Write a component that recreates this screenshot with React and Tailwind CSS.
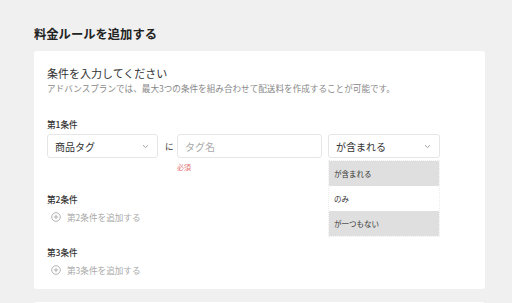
import React from "react";

const Chevron = () => (
  <svg width="7" height="5" viewBox="0 0 7 5" fill="none">
    <path d="M1 1.2 L3.5 3.6 L6 1.2" stroke="#9a9a9a" strokeWidth="0.9" />
  </svg>
);

const PlusCircle = () => (
  <svg width="10" height="10" viewBox="0 0 10 10" fill="none">
    <circle cx="5" cy="5" r="4.3" stroke="#aaaaaa" strokeWidth="0.9" />
    <path d="M5 2.8 V7.2 M2.8 5 H7.2" stroke="#aaaaaa" strokeWidth="0.9" />
  </svg>
);

export default function App() {
  return (
    <div
      className="w-[512px] h-[303px] overflow-hidden bg-[#f0f0f0] pl-[34px] pt-[26px]"
      style={{ fontFamily: '"Noto Sans CJK JP", "Noto Sans", sans-serif' }}
    >
      <div className="text-[12.3px] leading-[16px] font-bold text-[#222]">料金ルールを追加する</div>
      <div className="mt-[9px] w-[451px] bg-white rounded-[3px] pl-[13px] pt-[15px] pb-[13px]">
        <div className="text-[11px] leading-[14px] text-[#333]">条件を入力してください</div>
        <div className="mt-[2px] text-[8.6px] leading-[12px] text-[#888] whitespace-nowrap">
          アドバンスプランでは、最大3つの条件を組み合わせて配送料を作成することが可能です。
        </div>

        <div className="mt-[24px] text-[8.6px] leading-[12px] font-medium text-[#333]">第1条件</div>
        <div className="mt-[4px] flex items-start">
          <div className="w-[111px] h-[24px] shrink-0 border border-[#e6e6e6] rounded-[3px] flex items-center justify-between pl-[7px] pr-[8px]">
            <span className="text-[10px] text-[#333]">商品タグ</span>
            <Chevron />
          </div>
          <div className="h-[24px] w-[9px] shrink-0 flex items-center ml-[7px] mr-[3px] text-[8.6px] text-[#333]">に</div>
          <div className="flex flex-col shrink-0">
            <div className="w-[145px] h-[24px] border border-[#e6e6e6] rounded-[3px] flex items-center pl-[7px]">
              <span className="text-[10px] text-[#aaa]">タグ名</span>
            </div>
            <div className="mt-[4px] text-[7px] leading-[10px] text-[#e57373]">必須</div>
          </div>
          <div className="ml-[6px] relative shrink-0">
            <div className="w-[112px] h-[24px] border border-[#e6e6e6] rounded-[3px] flex items-center justify-between pl-[7px] pr-[8px]">
              <span className="text-[10px] text-[#333]">が含まれる</span>
              <Chevron />
            </div>
            <div className="absolute left-0 top-[26px] w-[112px] border border-dotted border-[#ececec] bg-white z-10">
              <div className="h-[25px] bg-[#dfdfdf] flex items-center pl-[5px] text-[7.5px] text-[#333]">が含まれる</div>
              <div className="h-[25px] bg-white flex items-center pl-[5px] text-[7.5px] text-[#333]">のみ</div>
              <div className="h-[25px] bg-[#dfdfdf] flex items-center pl-[5px] text-[7.5px] text-[#333]">が一つもない</div>
            </div>
          </div>
        </div>

        <div className="mt-[21px] text-[8.6px] leading-[12px] font-medium text-[#333]">第2条件</div>
        <div className="mt-[6px] flex items-center gap-[6px] pl-[4px] h-[12px]">
          <PlusCircle />
          <span className="text-[8.6px] text-[#aaa]">第2条件を追加する</span>
        </div>

        <div className="mt-[23px] text-[8.6px] leading-[12px] font-medium text-[#333]">第3条件</div>
        <div className="mt-[6px] flex items-center gap-[6px] pl-[4px] h-[12px]">
          <PlusCircle />
          <span className="text-[8.6px] text-[#aaa]">第3条件を追加する</span>
        </div>
      </div>
      <div className="mt-[13px] w-[451px] h-[20px] bg-white rounded-[3px]"></div>
    </div>
  );
}
